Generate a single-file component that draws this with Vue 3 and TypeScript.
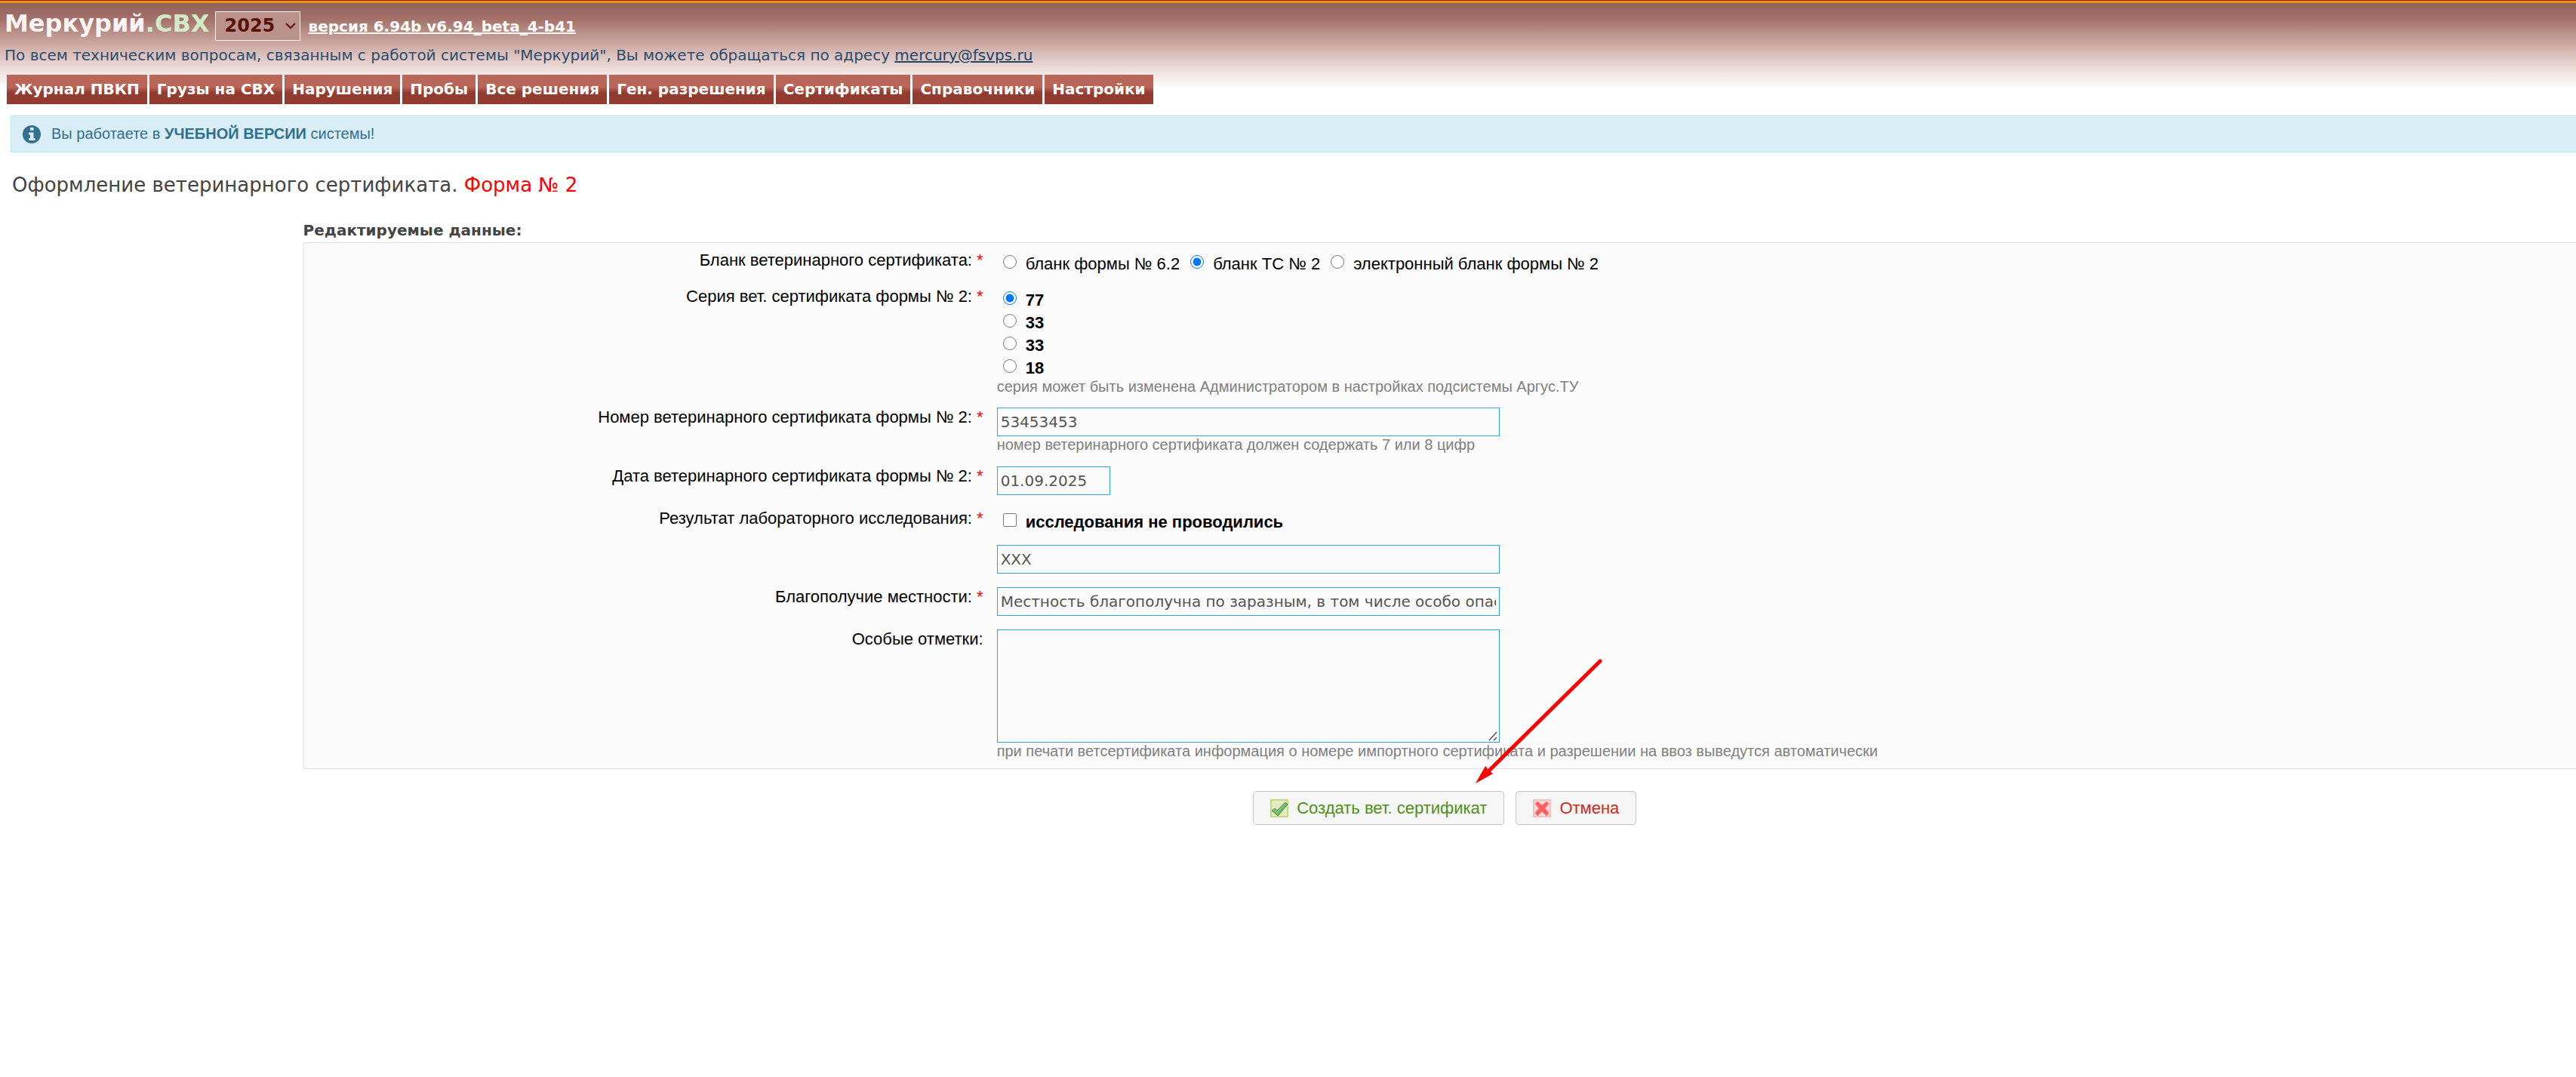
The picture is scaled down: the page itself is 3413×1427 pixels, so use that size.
<script setup lang="ts">
import { ref } from 'vue'

const year = ref('2025')
const menu = [
  'Журнал ПВКП',
  'Грузы на СВХ',
  'Нарушения',
  'Пробы',
  'Все решения',
  'Ген. разрешения',
  'Сертификаты',
  'Справочники',
  'Настройки',
]

const blanks = ['бланк формы № 6.2', 'бланк ТС № 2', 'электронный бланк формы № 2']
const blank = ref(1)

const seriesList = ['77', '33', '33', '18']
const series = ref(0)

const certNumber = ref('53453453')
const certDate = ref('01.09.2025')
const noResearch = ref(false)
const research = ref('XXX')
const locality = ref('Местность благополучна по заразным, в том числе особо опасным')
const notes = ref('')
</script>

<template>
  <div class="page">
    <header class="top">
      <div class="brand-row">
        <h1 class="brand">Меркурий<span class="brand-sub">.СВХ</span></h1>
        <div class="year">
          <select v-model="year" aria-label="Год">
            <option>2025</option>
          </select>
          <svg class="chevron" viewBox="0 0 14 9" width="14" height="9" aria-hidden="true">
            <path d="M1 1l6 6 6-6" fill="none" stroke="#5a1208" stroke-width="2" />
          </svg>
        </div>
        <a class="version" href="#">версия 6.94b v6.94_beta_4-b41</a>
      </div>
      <p class="support">
        По всем техническим вопросам, связанным с работой системы "Меркурий", Вы можете обращаться по адресу
        <a href="mailto:mercury@fsvps.ru">mercury@fsvps.ru</a>
      </p>
      <nav class="menu">
        <a v-for="item in menu" :key="item" href="#">{{ item }}</a>
      </nav>
    </header>

    <div class="notice">
      <svg viewBox="0 0 24 24" width="24" height="24" aria-hidden="true">
        <circle cx="12" cy="12" r="12" fill="#31708f" />
        <path d="M10 3h4.500v4h-4.500zM8 9.500h6.500v7.500h2v3h-8.500v-3h2v-4.500h-2z" fill="#d9edf7" />
      </svg>
      <p>Вы работаете в <b>УЧЕБНОЙ ВЕРСИИ</b> системы!</p>
    </div>

    <h2 class="title">Оформление ветеринарного сертификата. <span>Форма № 2</span></h2>

    <form class="layout" @submit.prevent>
      <div class="content">
        <h3 class="legend">Редактируемые данные:</h3>

        <div class="box">
          <div class="row" role="radiogroup" aria-labelledby="blank-label">
            <span id="blank-label" class="label">Бланк ветеринарного сертификата: <i>*</i></span>
            <div class="field options inline">
              <label v-for="(name, i) in blanks" :key="i" class="option">
                <input v-model="blank" type="radio" name="blank" :value="i" />{{ name }}
              </label>
            </div>
          </div>

          <div class="row" role="radiogroup" aria-labelledby="series-label">
            <span id="series-label" class="label">Серия вет. сертификата формы № 2: <i>*</i></span>
            <div class="field">
              <div class="options">
                <label v-for="(name, i) in seriesList" :key="i" class="option strong">
                  <input v-model="series" type="radio" name="series" :value="i" />{{ name }}
                </label>
              </div>
              <p class="hint">серия может быть изменена Администратором в настройках подсистемы Аргус.ТУ</p>
            </div>
          </div>

          <div class="row">
            <label class="label" for="number">Номер ветеринарного сертификата формы № 2: <i>*</i></label>
            <div class="field control">
              <input id="number" v-model="certNumber" class="text" type="text" />
              <p class="hint">номер ветеринарного сертификата должен содержать 7 или 8 цифр</p>
            </div>
          </div>

          <div class="row">
            <label class="label" for="date">Дата ветеринарного сертификата формы № 2: <i>*</i></label>
            <div class="field control">
              <input id="date" v-model="certDate" class="text short" type="text" />
            </div>
          </div>

          <div class="row">
            <label id="research-label" class="label" for="research">Результат лабораторного исследования: <i>*</i></label>
            <div class="field options">
              <label class="option strong">
                <input v-model="noResearch" type="checkbox" />исследования не проводились
              </label>
            </div>
          </div>

          <div class="row">
            <span class="label"></span>
            <div class="field control">
              <input id="research" v-model="research" class="text" type="text" />
            </div>
          </div>

          <div class="row">
            <label class="label" for="locality">Благополучие местности: <i>*</i></label>
            <div class="field control">
              <input id="locality" v-model="locality" class="text" type="text" />
            </div>
          </div>

          <div class="row">
            <label class="label" for="notes">Особые отметки:</label>
            <div class="field control">
              <textarea id="notes" v-model="notes" class="text area"></textarea>
              <p class="hint">
                при печати ветсертификата информация о номере импортного сертификата и разрешении на ввоз выведутся
                автоматически
              </p>
            </div>
          </div>
        </div>

        <div class="actions">
          <button class="btn create" type="submit">
            <svg viewBox="0 0 24 24" width="24" height="24" aria-hidden="true">
              <rect x="1" y="1" width="22" height="22" fill="#e4edbd" stroke="#c5d985" stroke-width="2" />
              <path d="M2 15l4-3 3 3L20 4l3 3L10 22z" fill="#68b263" stroke="#4d9a50" stroke-width="1" />
              <path d="M4 15l2-1 3 4L20 6" fill="none" stroke="#83c47c" stroke-width="2" />
            </svg>
            Создать вет. сертификат
          </button>
          <button class="btn cancel" type="button">
            <svg viewBox="0 0 24 24" width="24" height="24" aria-hidden="true">
              <rect x="1" y="1" width="22" height="22" fill="#fddada" stroke="#fabebe" stroke-width="2" />
              <path
                d="M6 3l6 5 6-5 3 3-5 6 5 6-3 4-6-6-6 6-3-4 5-6-5-6z"
                fill="#fb5f5f"
                stroke="#fb8080"
                stroke-width="1"
              />
            </svg>
            Отмена
          </button>
          <svg class="pointer" viewBox="0 0 170 168" width="170" height="168" aria-hidden="true">
            <path d="M165 4L19 148" stroke="#f00" stroke-width="5" stroke-linecap="round" />
            <path d="M0 166L13 143l4 5 6 5z" fill="#f00" />
          </svg>
        </div>
      </div>
    </form>
  </div>
</template>

<style>
body {
  margin: 0;
  background: #fff;
}
</style>

<style scoped>
.page {
  font-family: 'Liberation Sans', Arial, sans-serif;
  font-size: 22px;
  color: #000;
}

h1,
h2,
h3,
p {
  margin: 0;
}

.top {
  box-sizing: border-box;
  height: 138px;
  border-top: 1px solid #7a2410;
  background:
    linear-gradient(#f29a05, #ec9006) 0 0 / 100% 3px no-repeat,
    linear-gradient(#8f625c 3px, #a4706a 24px, #b0827a 34px, #d8bab5 68px, #f2e6e4 97px, #fff 117px);
  font-family: 'DejaVu Sans', Verdana, sans-serif;
}

.brand-row {
  display: flex;
  align-items: baseline;
  padding: 10px 6px 0;
  height: 46px;
}

.brand {
  font-size: 32px;
  line-height: 40px;
  color: #f8f4f4;
}

.brand-sub {
  color: #d0ebc6;
}

.year {
  position: relative;
  margin: 0 10px 0 8px;
}

.year select {
  appearance: none;
  box-sizing: border-box;
  width: 113px;
  height: 39px;
  padding: 0 0 0 11px;
  border: 1px solid #fff;
  border-radius: 0;
  background: #bb918b;
  color: #5a1208;
  font: bold 24px 'DejaVu Sans', Verdana, sans-serif;
}

.chevron {
  position: absolute;
  right: 6px;
  top: 15px;
}

.version {
  color: #fff;
  font-size: 20px;
  font-weight: bold;
}

.support {
  padding-left: 6px;
  font-size: 20px;
  line-height: 32px;
  color: #2a4c6c;
}

.support a {
  color: #1f4668;
}

.menu {
  display: flex;
  gap: 3px;
  padding: 10px 9px 0;
}

.menu a {
  padding: 0 10px;
  background: linear-gradient(#b96658 16px, #933a31 24px);
  color: #fff;
  font-size: 20px;
  font-weight: bold;
  line-height: 39px;
  text-decoration: none;
}

.notice {
  display: flex;
  align-items: center;
  gap: 14px;
  box-sizing: border-box;
  height: 49px;
  margin: 15px 0 0 14px;
  padding-left: 15px;
  border: 1px solid #bce8f1;
  border-right: 0;
  background: #d9edf7;
  color: #31708f;
  font-size: 20px;
}

.title {
  padding: 27px 16px 0;
  font-family: 'DejaVu Sans', Verdana, sans-serif;
  font-size: 26px;
  font-weight: normal;
  line-height: 32px;
  color: #444;
}

.title span {
  color: #f00;
}

.layout {
  display: grid;
  grid-template-columns: 2fr 15fr;
  padding-top: 31px;
}

.content {
  grid-column: 2;
}

.legend {
  padding-bottom: 3px;
  font-family: 'DejaVu Sans', Verdana, sans-serif;
  font-size: 20px;
  line-height: 26px;
  color: #444;
}

.box {
  padding: 1px 0 3px;
  border: 1px solid #e4e4e4;
  border-right: 0;
  background: #fbfbfb;
}

.row {
  display: flex;
  gap: 15px;
  padding: 8px 0;
}

.label {
  box-sizing: border-box;
  width: 30%;
  padding-right: 3px;
  line-height: 28px;
  text-align: right;
}

.label i {
  color: #f00;
  font-style: normal;
}

.field {
  flex: 1;
}

.control {
  padding: 1px 0;
}

.options {
  display: flex;
  flex-direction: column;
  gap: 4px;
  padding-top: 6px;
}

.inline {
  flex-direction: row;
  gap: 14px;
}

.inline .option:first-child,
.options:not(.inline) .option {
  margin-left: 8px;
}

.option {
  display: flex;
  align-items: flex-start;
  gap: 12px;
  line-height: 26px;
}

.option input {
  width: 18px;
  height: 18px;
  margin: 1px 0 0;
}

.strong {
  font-weight: bold;
}

.hint {
  color: #808080;
  font-size: 20px;
  line-height: 22px;
}

.text {
  display: block;
  box-sizing: border-box;
  width: 666px;
  max-width: 100%;
  height: 38px;
  padding: 0 4px;
  border: 1px solid #31a5d8;
  background: #fafafa;
  color: #555;
  font: 20px 'DejaVu Sans', Verdana, sans-serif;
}

.short {
  width: 150px;
}

.area {
  height: 150px;
}

.area::-webkit-resizer {
  background: url("data:image/svg+xml,%3Csvg xmlns='http://www.w3.org/2000/svg' viewBox='0 0 15 15'%3E%3Cpath d='M2 13L12 2M8 13l4-4' stroke='%23555' stroke-width='1.500'/%3E%3C/svg%3E") no-repeat;
}

.actions {
  position: relative;
  display: flex;
  justify-content: center;
  gap: 15px;
  width: max-content;
  margin: 29px auto 0;
  padding-left: 14px;
}

.btn {
  display: flex;
  align-items: center;
  gap: 11px;
  height: 45px;
  padding: 0 22px;
  border: 1px solid #c3c3c3;
  border-radius: 5px;
  background: #f6f6f6;
  font: 22px 'Liberation Sans', Arial, sans-serif;
}

.create {
  color: #4e9018;
}

.cancel {
  color: #cc2a1c;
}

.pointer {
  position: absolute;
  left: 309px;
  bottom: 53px;
}
</style>
